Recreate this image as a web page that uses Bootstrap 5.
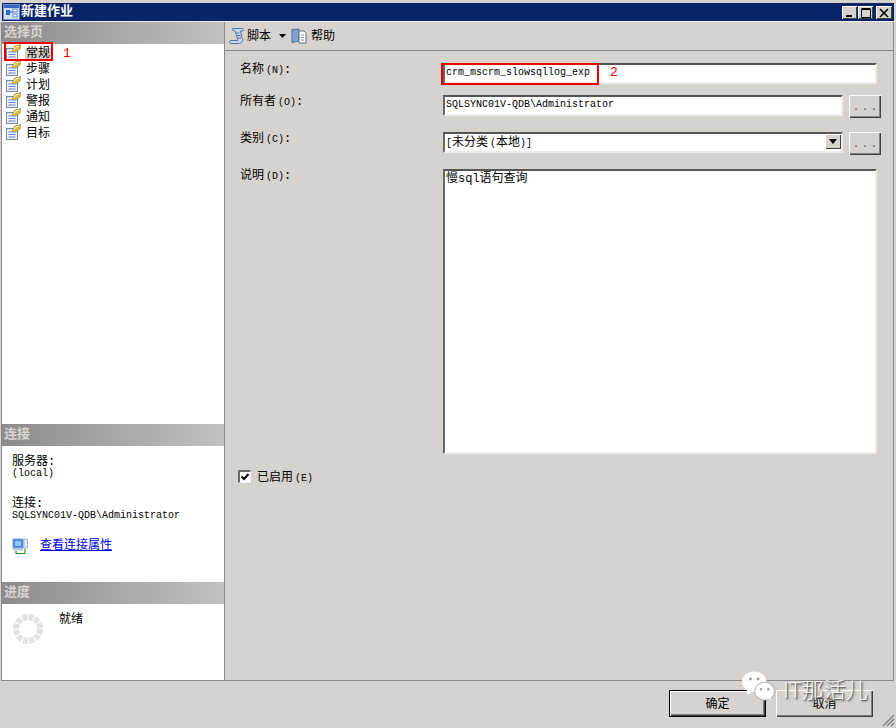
<!DOCTYPE html>
<html lang="zh">
<head>
<meta charset="utf-8">
<title>新建作业</title>
<link href="https://cdn.jsdelivr.net/npm/bootstrap@5.3.0/dist/css/bootstrap.min.css" rel="stylesheet">
<style>
html,body{height:728px;overflow:hidden}
body{background:#d6d3ce;color:#000;font-family:"Liberation Mono","Noto Sans CJK SC",monospace;font-size:12px;line-height:16px;position:relative}
.mono{font-size:10px}
.paren{font-size:10px;margin-left:2px}
.tbar{height:18px;margin:3px 2px 0 2px;background:#0a246a;color:#fff;font-weight:700;font-size:13px;line-height:20px;padding:0 2px 0 1px;gap:1px}
.wbtns{margin-left:auto}
.wbtn{width:15px;height:13px;background:#d6d3ce;box-shadow:inset 1px 1px 0 #fff,inset -1px -1px 0 #404040}
.wbtn+.wbtn{margin-left:1px}
.wbtn.wclose{width:16px;margin-left:3px}
.wbtn svg{display:block;margin:2px auto 0}
.main{height:660px;border-top:1px solid #f1efec}
.leftp{width:224px;margin-left:1px;background:#fff;border:solid #8a8888;border-width:0 1px 1px 1px;flex:none}
.sechd{height:22px;background:linear-gradient(90deg,#8d8b8b,#c2c0c2);color:#d9d6d0;font-weight:700;font-size:13px;line-height:22px;padding-left:2px;flex:none}
.pages{height:380px}
.pgitem{height:16px;line-height:13px;padding-left:3px;gap:4px}
.pgsel{background:#d6d3ce;padding:0 1px;margin-top:4px}
.pgtxt{padding:0 1px;margin-top:4px}
.conn{height:136px;padding:10px 0 0 10px}
.l1{line-height:12px}
.l2{line-height:11px}
.sp{height:15px}
.l3{line-height:15px;margin-top:3px}
.l4{line-height:8px}
.lnk{color:#0000e0;text-decoration:underline}
.connl{margin-top:18px;gap:12px;line-height:16px}
.prog{padding:9px 0 0 10px;gap:15px;flex:1}
.rdy{margin-top:-1px}
.rightp{width:669px;flex:none;border-right:1px solid #8a8888;border-bottom:1px solid #8a8888}
.tools{height:29px;border-bottom:1px solid #8a8888;padding-left:4px;flex:none}
.tools .ti{gap:2px}
.tools .ti.t2{gap:4px}
.tools .ti span{margin-top:2px}
.arr{margin:0 5px 0 8px}
.frm{padding:12px 0 0 15px}
.frow{display:flex}
.flab{width:203px;flex:none;line-height:14px}
.fld{background:#fff;border:2px solid;border-color:#555 #ededeb #ededeb #666;padding:0 0 0 1px;height:21px;line-height:15px;color:#000}
.fw1{width:434px}
.fw2{width:400px}
.fh{height:285px;padding-top:1px}
.cat{font-size:10px;word-spacing:-4px;line-height:19px}
.cj{font-size:12px}
.dots{width:32px;height:23px;margin-left:6px;background:#d6d3ce;box-shadow:inset 1px 1px 0 #fff,inset -1px -1px 0 #404040,inset -2px -2px 0 #808080;font-size:10px;line-height:18px;text-align:center;letter-spacing:3px;padding:3px 0 0 3px;border:0;border-radius:0;color:#444}
.r2{margin-top:11px}.r3,.r4{margin-top:14px}
.ddarr{width:16px;height:15px;background:#d6d3ce;box-shadow:inset 1px 1px 0 #fff,inset -1px -1px 0 #404040;flex:none;margin-left:auto}
.ddarr svg{display:block;margin:5px auto 0}
.chk{margin-top:14px;margin-left:-2px;gap:6px;height:16px}
.chk>span{margin-top:5px}
.ck{width:13px;height:13px;background:#fff;border:solid;border-color:#666 #f3f3f1 #f3f3f1 #666;border-width:2px 1px 1px 2px;flex:none}
.foot{height:47px;padding:9px 23px 0 0;gap:10px}
.okb,.cxb{width:97px;height:27px;border-radius:0;background:#d6d3ce;font-size:12px;line-height:20px;padding:2px 0 0;color:#000}
.okb{border:1px solid #000;box-shadow:inset 1px 1px 0 #fff,inset -1px -1px 0 #404040,inset -2px -2px 0 #808080}
.cxb{border:0;box-shadow:inset 1px 1px 0 #fff,inset -1px -1px 0 #404040,inset -2px -2px 0 #808080}
.redbx{position:absolute;border:2px solid #e80000}
.rb1{left:4px;top:42px;width:49px;height:19px}
.rb2{left:441px;top:63px;width:158px;height:22px}
.redn{position:absolute;color:#f00;font-size:13px;line-height:14px}
.rn1{left:63px;top:47px}
.rn2{left:610px;top:66px}
.wm{position:absolute;left:741px;top:670px;gap:8px}
.wmt{font-family:"Noto Sans CJK SC","Liberation Sans",sans-serif;font-size:22px;line-height:24px;text-shadow:1px 1px 1px #555,2px 2px 2px #999;margin-top:6px;color:#f8f8f8;font-weight:300}
.grip{position:absolute;right:1px;bottom:1px}
.defs{height:0;position:absolute}
</style>
</head>
<body>
<div class="tbar d-flex align-items-center">
  <svg width="17" height="16" viewBox="0 0 17 16"><rect x=".5" y=".5" width="16" height="15" fill="#cfe0f5" stroke="#6f8fc4"/><rect x="1" y="1" width="15" height="3" fill="#3a68c0"/><rect x="3" y="6" width="4" height="5" fill="#2d62c8"/><path d="M7 8h3" stroke="#2d62c8"/><rect x="10" y="5" width="4" height="3" fill="#fff" stroke="#2d62c8" stroke-width=".7"/><rect x="10" y="10" width="4" height="3" fill="#fff" stroke="#2d62c8" stroke-width=".7"/></svg>
  <span>新建作业</span>
  <div class="wbtns d-flex">
    <div class="wbtn"><svg width="10" height="10" viewBox="0 0 10 10"><rect x="1" y="7" width="6" height="2" fill="#000"/></svg></div>
    <div class="wbtn"><svg width="10" height="10" viewBox="0 0 10 10"><path d="M.5 1.5h9v8h-9z M.5 .5h9" fill="none" stroke="#000"/></svg></div>
    <div class="wbtn wclose"><svg width="10" height="10" viewBox="0 0 10 10"><path d="M1 1l8 8M9 1l-8 8" stroke="#000" stroke-width="1.6"/></svg></div>
  </div>
</div>
<div class="main d-flex">
  <div class="leftp d-flex flex-column">
    <div class="sechd">选择页</div>
    <div class="pages">
      <div class="pgitem d-flex align-items-center"><svg width="16" height="16"><use href="#pg"/></svg><span class="pgsel">常规</span></div>
      <div class="pgitem d-flex align-items-center"><svg width="16" height="16"><use href="#pg"/></svg><span class="pgtxt">步骤</span></div>
      <div class="pgitem d-flex align-items-center"><svg width="16" height="16"><use href="#pg"/></svg><span class="pgtxt">计划</span></div>
      <div class="pgitem d-flex align-items-center"><svg width="16" height="16"><use href="#pg"/></svg><span class="pgtxt">警报</span></div>
      <div class="pgitem d-flex align-items-center"><svg width="16" height="16"><use href="#pg"/></svg><span class="pgtxt">通知</span></div>
      <div class="pgitem d-flex align-items-center"><svg width="16" height="16"><use href="#pg"/></svg><span class="pgtxt">目标</span></div>
    </div>
    <div class="sechd">连接</div>
    <div class="conn">
      <div class="l1">服务器:</div>
      <div class="mono l2">(local)</div>
      <div class="sp"></div>
      <div class="l3">连接:</div>
      <div class="mono l4">SQLSYNC01V-QDB\Administrator</div>
      <div class="connl d-flex align-items-center">
        <svg width="16" height="16" viewBox="0 0 16 16"><rect x="1" y="1" width="10" height="9" fill="#3f86e8" stroke="#7f9cc8"/><rect x="3" y="3" width="6" height="5" fill="#8fc8ff"/><rect x="1" y="10.500" width="10" height="2" fill="#b7c3d6"/><rect x="12" y="1" width="3.500" height="9" fill="#e6ebf2" stroke="#7d8ba0" stroke-width=".6"/><path d="M4 13v2.500h9V11" fill="none" stroke="#2a9a2a" stroke-width="1.200"/></svg>
        <span class="lnk">查看连接属性</span>
      </div>
    </div>
    <div class="sechd">进度</div>
    <div class="prog d-flex align-items-start">
      <svg width="32" height="32" viewBox="0 0 32 32"><circle cx="16" cy="16" r="12" fill="none" stroke="#e3e0e4" stroke-width="6" stroke-dasharray="5 1.283"/></svg>
      <span class="rdy">就绪</span>
    </div>
  </div>
  <div class="rightp d-flex flex-column">
    <div class="tools d-flex align-items-center">
      <div class="ti d-flex align-items-center">
        <svg width="16" height="18" viewBox="0 0 16 18"><path d="M4 1.500h9.500c1.200 0 1.500 2 .5 2.500h-2.500L13 11c.800 1 1 2 .5 3s-1.500 2.500-3 2.500H2c-1.500 0-2-2.500-.5-3H9L6.500 5C6 3.500 5.500 3 4 3.500 3 3.500 3 1.500 4 1.500z" fill="#c4d7f2" stroke="#54739f"/><path d="M6.500 6h4M7.500 8.500h4M8.500 11h3.500" stroke="#54739f"/></svg>
        <span>脚本</span>
      </div>
      <svg width="7" height="4" viewBox="0 0 7 4" class="arr"><path d="M0 0h7L3.500 4z" fill="#000"/></svg>
      <div class="ti t2 d-flex align-items-center">
        <svg width="16" height="16" viewBox="0 0 16 16"><path d="M1 1.500L8 1v12l-7 1.500z" fill="#7f9fd0" stroke="#4f6f9f"/><path d="M8 3h5l2 2v10H8z" fill="#fff" stroke="#5f6f86"/><path d="M10 7h3M10 9.500h3M10 12h3" stroke="#7d8ba0"/></svg>
        <span>帮助</span>
      </div>
    </div>
    <form class="frm" onsubmit="return false">
      <div class="frow">
        <div class="flab">名称<span class="paren">(N)</span>:</div>
        <div class="fld mono fw1">crm_mscrm_slowsqllog_exp</div>
      </div>
      <div class="frow r2">
        <div class="flab">所有者<span class="paren">(O)</span>:</div>
        <div class="fld mono fw2">SQLSYNC01V-QDB\Administrator</div>
        <button type="button" class="dots btn">...</button>
      </div>
      <div class="frow r3">
        <div class="flab">类别<span class="paren">(C)</span>:</div>
        <div class="fld fw2 d-flex"><span class="cat">[<span class="cj">未分类</span> (<span class="cj">本地</span>)]</span><div class="ddarr"><svg width="8" height="5" viewBox="0 0 8 5"><path d="M0 0h8L4 5z" fill="#000"/></svg></div></div>
        <button type="button" class="dots btn">...</button>
      </div>
      <div class="frow r4">
        <div class="flab">说明<span class="paren">(D)</span>:</div>
        <div class="fld fw1 fh">慢sql语句查询</div>
      </div>
      <div class="chk d-flex align-items-center">
        <div class="ck"><svg width="10" height="10" viewBox="0 0 10 10" class="d-block"><path d="M1.500 4.500l2.500 2.500 4.500-5" fill="none" stroke="#000" stroke-width="2"/></svg></div>
        <span>已启用<span class="paren">(E)</span></span>
      </div>
    </form>
  </div>
</div>
<div class="foot d-flex justify-content-end">
  <button type="button" class="okb btn">确定</button>
  <button type="button" class="cxb btn">取消</button>
</div>

<div class="redbx rb1"></div>
<div class="redn rn1">1</div>
<div class="redbx rb2"></div>
<div class="redn rn2">2</div>

<div class="wm d-flex">
  <svg width="34" height="33" viewBox="0 0 36 34"><ellipse cx="14" cy="12" rx="13" ry="11" fill="#fff" fill-opacity=".95"/><path d="M6 20l1 6 6-4z" fill="#fff"/><circle cx="10" cy="9" r="1.500" fill="#999"/><circle cx="18" cy="9" r="1.500" fill="#999"/><ellipse cx="25" cy="22" rx="10.500" ry="9.500" fill="#fff" stroke="#999" stroke-width=".8"/><path d="M29 29l3 4-1-5z" fill="#fff"/><circle cx="21" cy="20" r="1.300" fill="#999"/><circle cx="29" cy="20" r="1.300" fill="#999"/></svg>
  <span class="wmt">IT那活儿</span>
</div>
<svg class="grip" width="14" height="14" viewBox="0 0 14 14"><path d="M13 2L2 13M13 6l-7 7M13 10l-3 3" stroke="#777" stroke-width="1.200"/></svg>

<svg width="0" height="0" class="defs"><defs><symbol id="pg" viewBox="0 0 16 16"><rect x="1.500" y="4.500" width="11" height="11" fill="#eef0fa" stroke="#7a86a0"/><path d="M3.500 8h7M3.500 10.500h7M3.500 13h7" stroke="#5f86c0"/><path d="M7 6.500l3-4.500 5.500-1.500L15 5l-4 3z" fill="#dcc040" stroke="#7d7a20" stroke-width=".6"/><path d="M8.500 6L11 3l3-1" fill="none" stroke="#fff8c0"/></symbol></defs></svg>
</body>
</html>
